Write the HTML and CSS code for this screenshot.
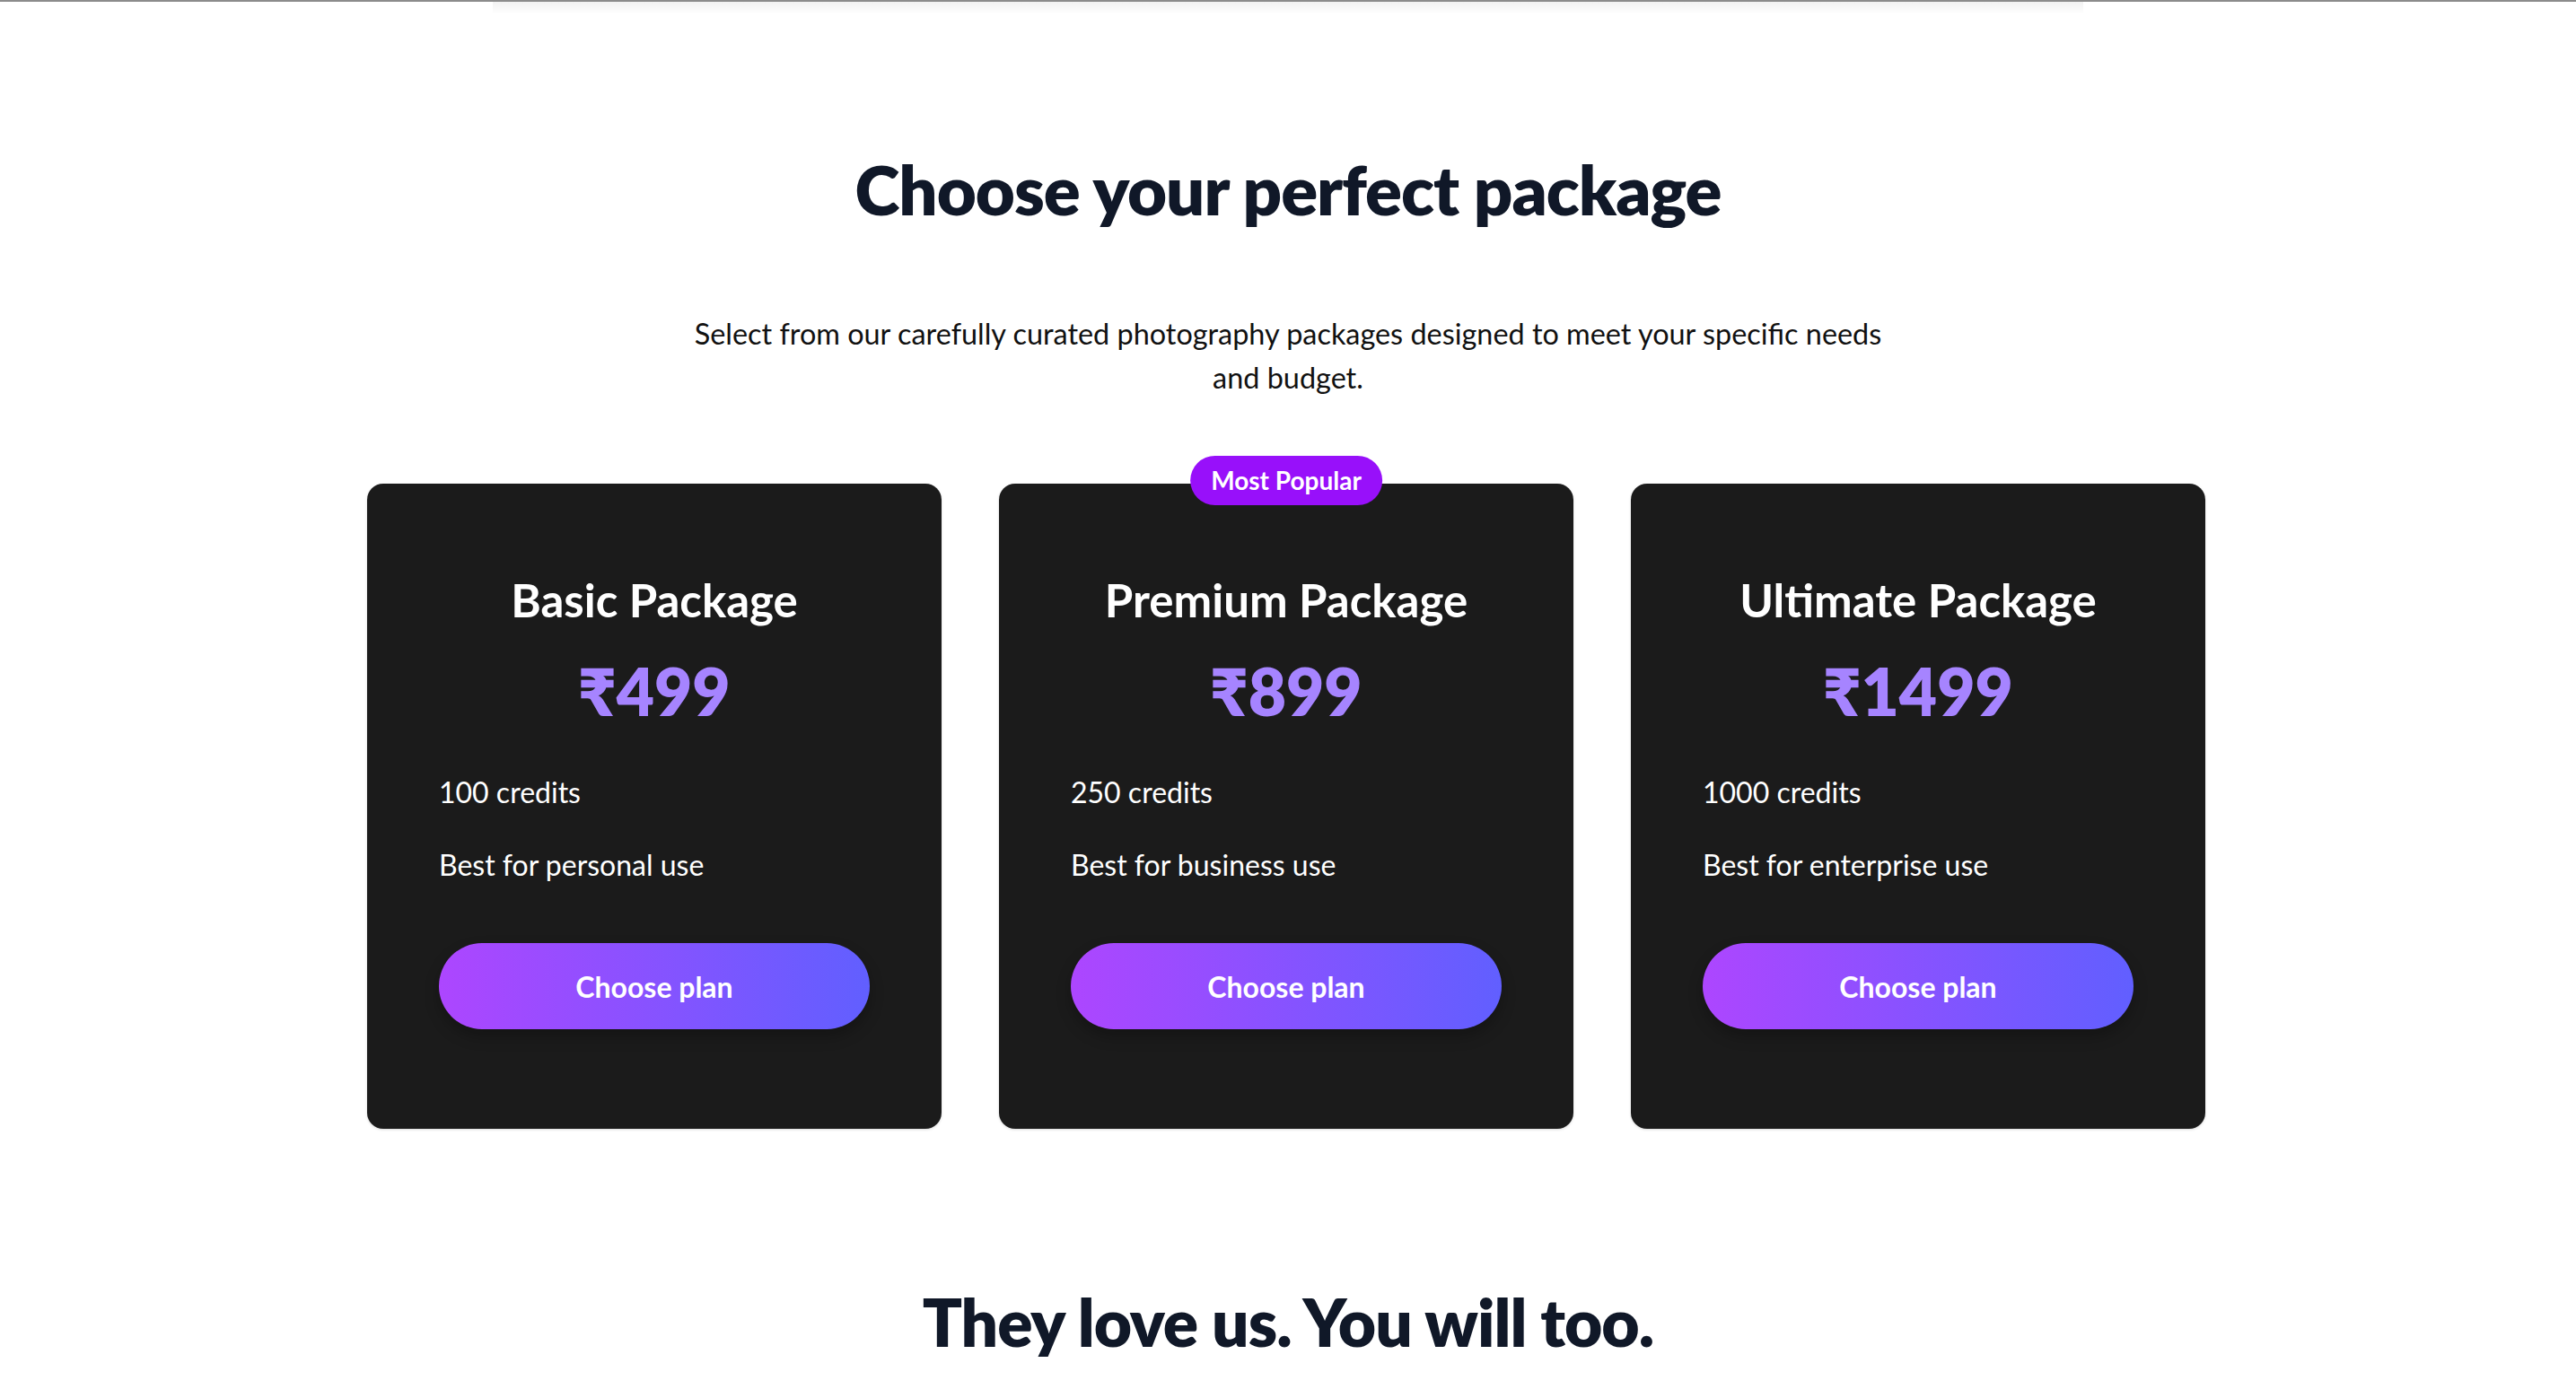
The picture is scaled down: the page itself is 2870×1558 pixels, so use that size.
FILE: index.html
```html
<!DOCTYPE html>
<html lang="en">
<head>
<meta charset="utf-8">
<title>Choose your perfect package</title>
<link rel="stylesheet" href="styles.css">
</head>
<body>
<div class="topline"></div>
<div class="topshade"></div>
<main class="pricing">
  <h2 class="heading">Choose your perfect package</h2>
  <p class="subtitle">Select from our carefully curated photography packages designed to meet your specific needs and budget.</p>
  <div class="cards">
    <div class="card">
      <h3 class="card-title">Basic Package</h3>
      <div class="price">₹499</div>
      <ul class="features">
        <li>100 credits</li>
        <li>Best for personal use</li>
      </ul>
      <button class="cta">Choose plan</button>
    </div>
    <div class="card popular">
      <span class="badge">Most Popular</span>
      <h3 class="card-title">Premium Package</h3>
      <div class="price">₹899</div>
      <ul class="features">
        <li>250 credits</li>
        <li>Best for business use</li>
      </ul>
      <button class="cta">Choose plan</button>
    </div>
    <div class="card">
      <h3 class="card-title">Ultimate Package</h3>
      <div class="price">₹1499</div>
      <ul class="features">
        <li>1000 credits</li>
        <li>Best for enterprise use</li>
      </ul>
      <button class="cta">Choose plan</button>
    </div>
  </div>
  <h2 class="heading love">They love us. You will too.</h2>
</main>
</body>
</html>
```

FILE: styles.css
```css
* { box-sizing: border-box; }
html, body {
  margin: 0;
  padding: 0;
  background: #ffffff;
  font-family: "Lato", "Noto Sans", sans-serif;
}
.topline {
  height: 2px;
  background: #8c8c8c;
}
.topshade {
  height: 14px;
  margin: 0 549px;
  background: linear-gradient(to bottom, rgba(0,0,0,0.05), rgba(0,0,0,0));
}
.pricing {
  display: flex;
  flex-direction: column;
  align-items: center;
  padding-top: 156px;
}
.heading {
  margin: 0;
  font-size: 76px;
  line-height: 77px;
  font-weight: 800;
  color: #101828;
  letter-spacing: -1px;
  text-align: center;
}
.subtitle {
  margin: 98px 0 0;
  width: 1350px;
  font-size: 32.4px;
  line-height: 49px;
  color: #111111;
  text-align: center;
}
.cards {
  margin-top: 94px;
  display: grid;
  grid-template-columns: repeat(3, 640px);
  gap: 64px;
  margin-right: 4px;
}
.card {
  position: relative;
  background: #1b1b1b;
  border-radius: 18px;
  padding: 101px 80px 111px;
  display: flex;
  flex-direction: column;
  box-shadow: 0 1px 3px rgba(0,0,0,0.15);
}
.badge {
  position: absolute;
  top: -31px;
  left: 50%;
  transform: translateX(-50%);
  background: #9810fa;
  color: #ffffff;
  font-weight: 700;
  font-size: 28px;
  line-height: 55px;
  height: 55px;
  padding: 0 23px;
  border-radius: 28px;
  white-space: nowrap;
}
.card-title {
  margin: 0;
  font-size: 51px;
  line-height: 58px;
  font-weight: 700;
  color: #ffffff;
  text-align: center;
}
.price {
  margin-top: 24px;
  font-size: 73px;
  line-height: 96px;
  font-weight: 800;
  color: #a684ff;
  text-align: center;
}
.features {
  list-style: none;
  margin: 43px 0 0;
  padding: 0;
  display: flex;
  flex-direction: column;
  gap: 37px;
}
.features li {
  font-size: 32px;
  line-height: 44px;
  color: #ffffff;
}
.cta {
  margin-top: 65px;
  height: 96px;
  width: 100%;
  border: none;
  border-radius: 48px;
  background: linear-gradient(to right, #ad46ff, #615fff);
  color: #ffffff;
  font-family: inherit;
  font-weight: 700;
  font-size: 32px;
  box-shadow: 0 8px 16px rgba(0,0,0,0.25);
}
.love {
  margin-top: 177px;
  font-size: 73px;
}
```
